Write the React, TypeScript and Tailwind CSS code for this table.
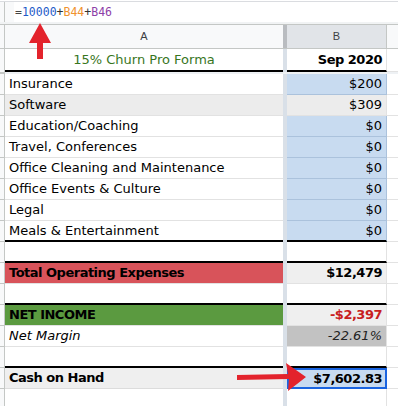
import React from "react"

type RowProps = {
  a?: React.ReactNode
  b?: React.ReactNode
  aCls?: string
  bCls?: string
  thick?: boolean
  blue?: boolean
}

function Row({ a, b, aCls = "", bCls = "", thick = false, blue = false }: RowProps) {
  const line = thick ? "border-b-2 border-b-black" : "border-b border-b-[#e2e2e2]"
  const bLine = thick ? "border-b-2 border-b-black" : blue ? "border-b border-b-[#abc2dc]" : "border-b border-b-[#e2e2e2]"
  return (
    <div className="flex h-[21px]">
      <div className="w-[5px] shrink-0 bg-[#f8f9fa] border-r border-b border-[#c4c7c5]" />
      <div className={`w-[278px] shrink-0 flex items-center pl-[4px] pr-[4px] ${line} ${aCls}`}>{a}</div>
      <div className="w-[4px] shrink-0 bg-[#d9e0e8]" />
      <div className={`w-[100px] shrink-0 flex items-center justify-end pr-[4px] border-r ${blue ? "border-r-[#abc2dc]" : "border-r-[#e2e2e2]"} ${bLine} ${bCls}`}>{b}</div>
      <div className="flex-1 border-b border-[#e2e2e2]" />
    </div>
  )
}

export default function App() {
  return (
    <div
      className="relative w-[398px] h-[406px] overflow-hidden bg-white text-black text-[13px]"
      style={{ fontFamily: '"DejaVu Sans", sans-serif' }}
    >
      {/* formula bar */}
      <div className="flex h-[21px] border-t border-[#dadce0] mt-[1px]">
        <div className="w-[5px] bg-[#f8f9fa] border-r border-[#c4c7c5]" />
        <div className="w-[9px] bg-[#f8f9fa]" />
        <div
          className="flex-1 flex items-center pl-[1px] pt-[1px] text-[11.5px] bg-white"
          style={{ fontFamily: '"DejaVu Sans Mono", monospace' }}
        >
          <span className="text-[#444]">=</span>
          <span className="text-[#1f5bc9]">10000</span>
          <span className="text-[#333]">+</span>
          <span className="text-[#f0922e]">B44</span>
          <span className="text-[#333]">+</span>
          <span className="text-[#8e3fa8]">B46</span>
        </div>
      </div>
      <div className="h-[2px] bg-[#f1f3f4]" />

      {/* column headers */}
      <div
        className="flex h-[25px] border-t border-b border-[#c4c7c5] text-[11px] text-[#3c4043]"
        style={{ fontFamily: '"Liberation Sans", sans-serif' }}
      >
        <div className="w-[5px] bg-[#f8f9fa] border-r border-[#c4c7c5]" />
        <div className="w-[278px] flex items-center justify-center bg-[#f8f9fa]">A</div>
        <div className="w-[4px] bg-[#b9bcc0]" />
        <div className="w-[100px] flex items-center justify-center bg-[#e1e4e8] border-r border-[#c4c7c5]">B</div>
        <div className="flex-1 bg-[#f8f9fa]" />
      </div>

      {/* frozen row 1 */}
      <div className="flex h-[23px]">
        <div className="w-[5px] shrink-0 bg-[#f8f9fa] border-r border-[#c4c7c5]" />
        <div className="w-[278px] shrink-0 flex items-center justify-center text-[#38761d] border-b-2 border-b-black">
          15% Churn Pro Forma
        </div>
        <div className="w-[4px] shrink-0 bg-[#d9e0e8]" />
        <div className="w-[100px] shrink-0 flex items-center justify-end pr-[4px] font-bold tracking-[-0.5px] border-b-2 border-b-black border-r border-r-[#e2e2e2]">
          Sep 2020
        </div>
        <div className="flex-1 border-b border-[#e2e2e2]" />
      </div>
      <div className="flex h-[2px]">
        <div className="w-[5px] bg-[#c4c7c5]" />
        <div className="flex-1 bg-[#eef1f4]" />
      </div>

      <Row a="Insurance" b="$200" blue bCls="bg-[#c8dbf0]" />
      <Row a="Software" b="$309" aCls="bg-[#ececec]" bCls="bg-[#ececec]" />
      <Row a="Education/Coaching" b="$0" blue bCls="bg-[#c8dbf0]" />
      <Row a="Travel, Conferences" b="$0" blue bCls="bg-[#c8dbf0]" />
      <Row a="Office Cleaning and Maintenance" b="$0" blue bCls="bg-[#c8dbf0]" />
      <Row a="Office Events & Culture" b="$0" blue bCls="bg-[#c8dbf0]" />
      <Row a="Legal" b="$0" blue bCls="bg-[#c8dbf0]" />
      <Row a="Meals & Entertainment" b="$0" blue thick bCls="bg-[#c8dbf0]" />
      <Row thick />
      <Row
        a="Total Operating Expenses"
        b="$12,479"
        aCls="bg-[#d8535a] font-bold tracking-[-0.5px]"
        bCls="bg-[#efefef] font-bold tracking-[-0.5px]"
      />
      <Row thick />
      <Row
        a="NET INCOME"
        b="-$2,397"
        aCls="bg-[#5b9a40] font-bold tracking-[-0.5px]"
        bCls="bg-[#efefef] font-bold tracking-[-0.5px] text-[#c8201e]"
      />
      <Row a="Net Margin" b="-22.61%" aCls="italic" bCls="bg-[#c2c2c2] italic text-[#222]" />
      <Row thick />
      <div className="flex h-[21px]">
        <div className="w-[5px] shrink-0 bg-[#f8f9fa] border-r border-b border-[#c4c7c5]" />
        <div className="w-[278px] shrink-0 flex items-center pl-[4px] bg-[#efefef] font-bold tracking-[-0.5px] border-b border-[#dcdcdc]">
          Cash on Hand
        </div>
        <div className="w-[4px] shrink-0 bg-[#d9e0e8]" />
        <div className="w-[100px] shrink-0 flex items-center justify-end pr-[3px] bg-[#c8dbf0] font-bold tracking-[-0.5px] border-2 border-[#1a64e0]">
          $7,602.83
        </div>
        <div className="flex-1 border-b border-[#e2e2e2]" />
      </div>
      <Row />

      {/* annotation arrows */}
      <svg className="absolute left-0 top-0 pointer-events-none" width="398" height="406">
        <polygon points="40,23 29,43 37,43 37,59 43,59 43,43 51,43" fill="#e3232c" />
        <polygon points="237,375 237,380 289,379 288,391 306,377 286,363 288,374" fill="#e3232c" />
      </svg>
    </div>
  )
}
